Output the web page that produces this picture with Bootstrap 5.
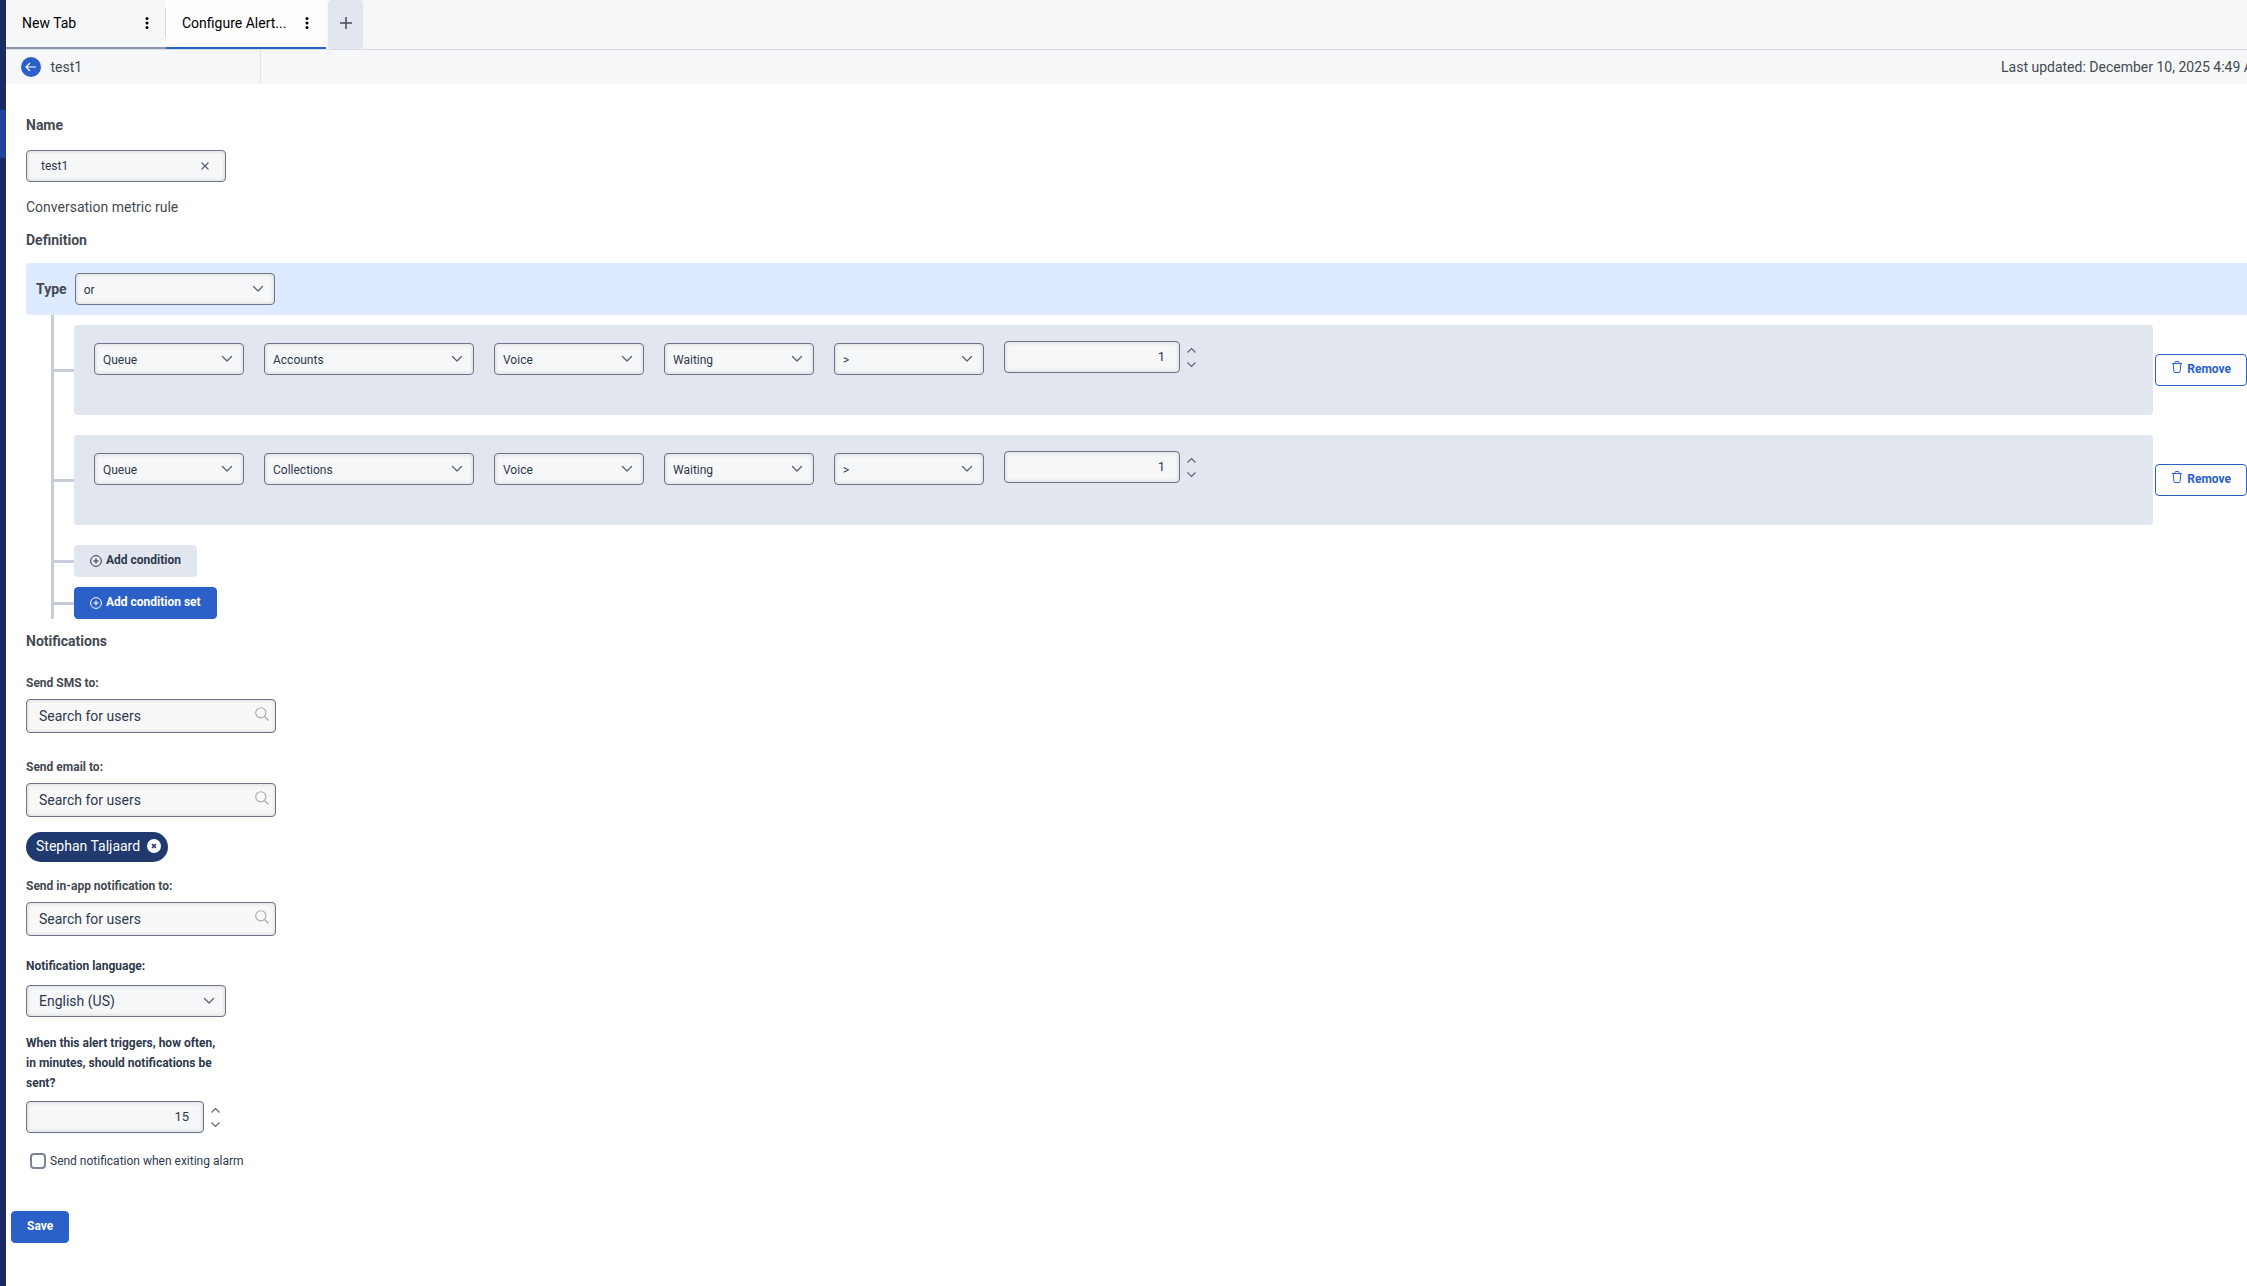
<!DOCTYPE html>
<html lang="en">
<head>
<meta charset="utf-8">
<meta name="viewport" content="width=device-width, initial-scale=1">
<title>Configure Alert</title>
<link href="https://cdn.jsdelivr.net/npm/bootstrap@5.3.0/dist/css/bootstrap.min.css" rel="stylesheet">
<style>
  body { font-family: Roboto, "Liberation Sans", sans-serif; font-size: 14px; line-height: 20px; color: #444a52; background: #fdfdfe; }
  svg { display: block; flex: none; }
  button { font: inherit; }
  .rail { width: 6px; background: #1b2a65; padding-top: 110px; }
  .rail-active { height: 48px; background: #2143a0; }
  .page { min-width: 0; background: #fff; }

  .tabs { height: 50px; background: #f6f7f9; border-bottom: 1px solid #d9dce2; }
  .tab { width: 160px; height: 49px; padding: 0 13px 2px 16px; border-bottom: 2px solid #8b96ae; color: #000; }
  .tab.current { background: #fdfdfe; border-color: #2a60c8; }
  .tab a { color: inherit; }
  .tab-split { width: 1px; height: 30px; background: #d0d4dc; position: absolute; right: 0; top: 8px; }
  .tab-add { width: 35px; height: 49px; margin-left: 2px; padding: 0 0 3px; background: #e2e6ee; color: #444a57; border-radius: 4px; }
  .plain { border: 0; padding: 0; background: none; color: inherit; }

  .crumb { height: 34px; padding-bottom: 1px; background: #f6f7f9; }
  .crumb-title { width: 255px; height: 33px; padding: 0 15px; border-right: 1px solid #dfe2e8; }
  .back { width: 20px; height: 20px; background: #2a60c8; }
  .updated { flex: 0 0 246px; }

  .form-area { padding: 31px 0 0 20px; }
  .heading { font-size: 14px; line-height: 20px; font-weight: 700; margin: 0; }
  .name-label, .name-field { margin-bottom: 15px; }
  .name-field { padding: 0 16px 0 14px; }
  .def { margin: 13px 0; }
  .notes { margin: 12px 0 22px; }
  .caption { display: block; font-size: 12px; line-height: 20px; font-weight: 700; }
  .dark { color: #2e394c; }
  .w-field { width: 200px; }
  .w-search { width: 250px; }
  .w-cond { width: 150px; }
  .w-queue { width: 210px; }
  .w-amount { width: 176px; }
  .w-often { width: 178px; }

  .field, .form-select.pick {
    height: 32px; border: 1px solid #6b7489; border-radius: 4px; background-color: #f6f7f9; color: #2e394c;
    box-shadow: inset 0 0 4px rgba(0, 0, 0, .16); font-size: 12px; line-height: 20px;
  }
  .form-select.pick {
    --bs-form-select-bg-img: url("data:image/svg+xml,%3Csvg xmlns='http://www.w3.org/2000/svg' viewBox='0 0 12 12'%3E%3Cpath fill='none' stroke='%23596275' stroke-width='1.3' stroke-linecap='round' stroke-linejoin='round' d='M1.5 3.5 6 8l4.500-4.500'/%3E%3C/svg%3E");
    padding: 6px 28px 4px 8px; background-position: right 10px center; background-size: 12px 12px;
  }
  .form-select.pick.large { font-size: 14px; padding: 5px 28px 5px 12px; }
  .field input { flex: 1; min-width: 0; border: 0; background: none; outline: 0; color: inherit; padding: 0; }
  .field input::placeholder { color: #2e394c; opacity: 1; }
  .search { height: 34px; padding: 0 6px 0 12px; background-color: #f8f8f8; font-size: 14px; }
  .search svg { margin-bottom: 4px; }
  .number { padding: 0 14px; font-size: 13px; }
  .number input { text-align: right; appearance: textfield; -moz-appearance: textfield; }
  .number input::-webkit-inner-spin-button { -webkit-appearance: none; margin: 0; }
  .spin { margin-left: 7px; gap: 7px; color: #596275; }

  .type-bar { height: 52px; background: #deeaff; padding: 0 10px; border-radius: 4px 0 0 4px; }
  .tree { margin-left: 25px; padding-top: 10px; border-left: 3px solid #c6ccda; }
  .branch { margin-bottom: 20px; }
  .leaf { margin-bottom: 10px; }
  .twig { flex: 0 0 20px; height: 3px; background: #c6ccda; }
  .condition { height: 90px; background: #e2e6ee; border-radius: 4px; padding: 18px 20px; gap: 20px; }
  .amount { margin-top: -2px; height: 32px; }
  .btn.act { --bs-btn-font-size: 12px; --bs-btn-line-height: 16px; --bs-btn-font-weight: 700; --bs-btn-border-radius: 4px; height: 32px; padding: 6px 15px 8px; }
  .btn-blue { --bs-btn-color: #fff; --bs-btn-bg: #2a60c8; --bs-btn-border-color: #2a60c8; }
  .btn-grey { --bs-btn-color: #2e394c; --bs-btn-bg: #e2e6ee; --bs-btn-border-color: #e2e6ee; }
  .btn-line { --bs-btn-color: #2a60c8; --bs-btn-bg: #fdfdfe; --bs-btn-border-color: #2a60c8; }
  .btn.remove { margin-left: 2px; gap: 5px; padding-left: 16px; }
  .add { gap: 4px; }
  .add svg { margin-top: 3px; }

  .gap-under { margin-bottom: 6px; }
  .sms-field { margin-bottom: 24px; }
  .chips { margin: 15px 0 14px; }
  .chip { height: 30px; padding: 0 7px 2px 10px; gap: 7px; background: #20396e; color: #fff; border-radius: 15px; }
  .inapp-field { margin-bottom: 20px; }
  .lang-label { margin-bottom: 9px; }
  .question { width: 200px; margin-top: 16px; }
  .exit-row { margin: 18px 0 40px 4px; font-size: 12px; }
  .form-check-input.tick { width: 16px; height: 16px; margin: 0; border: 2px solid #7b8496; border-radius: 4px; }
  .save { margin-left: -15px; }
</style>
<script src="https://cdn.jsdelivr.net/npm/bootstrap@5.3.0/dist/js/bootstrap.bundle.min.js"></script>
</head>
<body>
<svg class="d-none">
  <symbol id="dots" viewBox="0 0 4 12"><circle cx="2" cy="1.500" r="1.500"/><circle cx="2" cy="6" r="1.500"/><circle cx="2" cy="10.500" r="1.500"/></symbol>
  <symbol id="up" viewBox="0 0 9 7"><path d="M.5 5.500 4.500 1.500l4 4" fill="none" stroke="currentColor" stroke-width="1.100"/></symbol>
  <symbol id="down" viewBox="0 0 9 7"><path d="M.5 1.500l4 4 4-4" fill="none" stroke="currentColor" stroke-width="1.100"/></symbol>
  <symbol id="plus-ring" viewBox="0 0 12 12"><circle cx="6" cy="6" r="5.400" fill="none" stroke="currentColor" stroke-width="1"/><path d="M6 3.400v5.200M3.400 6h5.200" stroke="currentColor" stroke-width="1.200"/></symbol>
  <symbol id="glass" viewBox="0 0 14 14"><circle cx="5.800" cy="5.800" r="5.100" fill="none" stroke="#a9a9a9" stroke-width="1.100"/><path d="M9.500 9.500l4 4" stroke="#a9a9a9" stroke-width="1.200"/></symbol>
  <symbol id="bin" viewBox="0 0 10 12"><path d="M0 2.500h10M3 2.500v-1q0-1 1-1h2q1 0 1 1v1M1.200 2.500l.7 8q.1 1 1.100 1h4q1 0 1.100-1l.7-8" fill="none" stroke="currentColor" stroke-width="1"/></symbol>
</svg>

<div class="d-flex min-vh-100">
  <nav class="rail flex-shrink-0" aria-label="Main"><div class="rail-active"></div></nav>
  <main class="page flex-grow-1">
    <header class="tabs d-flex">
      <div class="tab d-flex align-items-center justify-content-between position-relative">
        <a href="#" class="text-decoration-none">New Tab</a>
        <button class="plain px-1" aria-label="Tab menu"><svg width="4" height="12"><use href="#dots"/></svg></button>
        <span class="tab-split"></span>
      </div>
      <div class="tab current d-flex align-items-center justify-content-between">
        <a href="#" class="text-decoration-none">Configure Alert...</a>
        <button class="plain px-1" aria-label="Tab menu"><svg width="4" height="12"><use href="#dots"/></svg></button>
      </div>
      <button class="tab-add border-0 d-flex align-items-center justify-content-center" aria-label="Add tab">
        <svg width="12" height="12" viewBox="0 0 12 12"><path d="M6 0v12M0 6h12" stroke="currentColor" stroke-width="1.500"/></svg>
      </button>
    </header>

    <div class="crumb d-flex align-items-center justify-content-between">
      <div class="crumb-title d-flex align-items-center">
        <button class="plain back rounded-circle d-flex align-items-center justify-content-center" aria-label="Back">
          <svg width="12" height="10" viewBox="0 0 12 10"><path d="M5 1 1 5l4 4M1 5h10" fill="none" stroke="#fff" stroke-width="1.200"/></svg>
        </button>
        <span class="ms-2 ps-0">&#8202;test1</span>
      </div>
      <div class="updated text-nowrap overflow-hidden">Last updated: December 10, 2025 4:49 AM</div>
    </div>

    <form class="form-area">
      <label class="heading name-label d-block" for="name">Name</label>
      <div class="field name-field w-field d-flex align-items-center">
        <input id="name" type="text" value="test1">
        <button type="button" class="plain" aria-label="Clear name"><svg width="8" height="8" viewBox="0 0 8 8"><path d="M.5.5l7 7M7.500.5l-7 7" stroke="#596275" stroke-width="1.200"/></svg></button>
      </div>
      <p class="mb-0">Conversation metric rule</p>
      <h2 class="heading def">Definition</h2>

      <div class="type-bar d-flex align-items-center">
        <label class="heading me-2" for="type">Type</label>
        <select id="type" class="form-select pick w-field"><option>or</option></select>
      </div>

      <div class="tree">
        <div class="d-flex align-items-center branch">
          <span class="twig"></span>
          <div class="condition flex-grow-1 d-flex align-items-start">
            <select class="form-select pick w-cond" aria-label="Scope"><option>Queue</option></select>
            <select class="form-select pick w-queue" aria-label="Queue name"><option>Accounts</option></select>
            <select class="form-select pick w-cond" aria-label="Media"><option>Voice</option></select>
            <select class="form-select pick w-cond" aria-label="Metric"><option>Waiting</option></select>
            <select class="form-select pick w-cond" aria-label="Operator"><option>&gt;</option></select>
            <div class="amount d-flex align-items-center">
              <div class="field number d-flex w-amount"><input type="number" value="1" aria-label="Threshold"></div>
              <div class="spin d-flex flex-column">
                <button type="button" class="plain" aria-label="Increase"><svg width="9" height="7"><use href="#up"/></svg></button>
                <button type="button" class="plain" aria-label="Decrease"><svg width="9" height="7"><use href="#down"/></svg></button>
              </div>
            </div>
          </div>
          <button type="button" class="btn btn-line act remove d-flex"><svg width="10" height="12"><use href="#bin"/></svg>Remove</button>
        </div>
        <div class="d-flex align-items-center branch">
          <span class="twig"></span>
          <div class="condition flex-grow-1 d-flex align-items-start">
            <select class="form-select pick w-cond" aria-label="Scope"><option>Queue</option></select>
            <select class="form-select pick w-queue" aria-label="Queue name"><option>Collections</option></select>
            <select class="form-select pick w-cond" aria-label="Media"><option>Voice</option></select>
            <select class="form-select pick w-cond" aria-label="Metric"><option>Waiting</option></select>
            <select class="form-select pick w-cond" aria-label="Operator"><option>&gt;</option></select>
            <div class="amount d-flex align-items-center">
              <div class="field number d-flex w-amount"><input type="number" value="1" aria-label="Threshold"></div>
              <div class="spin d-flex flex-column">
                <button type="button" class="plain" aria-label="Increase"><svg width="9" height="7"><use href="#up"/></svg></button>
                <button type="button" class="plain" aria-label="Decrease"><svg width="9" height="7"><use href="#down"/></svg></button>
              </div>
            </div>
          </div>
          <button type="button" class="btn btn-line act remove d-flex"><svg width="10" height="12"><use href="#bin"/></svg>Remove</button>
        </div>
        <div class="d-flex align-items-center leaf">
          <span class="twig"></span>
          <button type="button" class="btn btn-grey act d-flex add"><svg width="12" height="12"><use href="#plus-ring"/></svg>Add condition</button>
        </div>
        <div class="d-flex align-items-center">
          <span class="twig"></span>
          <button type="button" class="btn btn-blue act d-flex add"><svg width="12" height="12"><use href="#plus-ring"/></svg>Add condition set</button>
        </div>
      </div>

      <h2 class="heading notes">Notifications</h2>

      <label class="caption gap-under" for="sms">Send SMS to:</label>
      <div class="field search w-search d-flex align-items-center sms-field">
        <input id="sms" type="text" placeholder="Search for users"><svg width="14" height="14"><use href="#glass"/></svg>
      </div>

      <label class="caption gap-under" for="email">Send email to:</label>
      <div class="field search w-search d-flex align-items-center">
        <input id="email" type="text" placeholder="Search for users"><svg width="14" height="14"><use href="#glass"/></svg>
      </div>
      <div class="d-flex chips">
        <span class="chip d-inline-flex align-items-center">Stephan Taljaard
          <button type="button" class="plain" aria-label="Remove Stephan Taljaard"><svg width="14" height="14" viewBox="0 0 14 14"><circle cx="7" cy="7" r="7" fill="#fff"/><path d="M5 5l4 4M9 5l-4 4" stroke="#20396e" stroke-width="1.600"/></svg></button>
        </span>
      </div>

      <label class="caption gap-under" for="inapp">Send in-app notification to:</label>
      <div class="field search w-search d-flex align-items-center inapp-field">
        <input id="inapp" type="text" placeholder="Search for users"><svg width="14" height="14"><use href="#glass"/></svg>
      </div>

      <label class="caption dark lang-label" for="lang">Notification language:</label>
      <select id="lang" class="form-select pick large w-field"><option>English (US)</option></select>

      <label class="caption dark question mb-2" for="often">When this alert triggers, how often, in minutes, should notifications be sent?</label>
      <div class="d-flex align-items-center">
        <div class="field number d-flex w-often"><input id="often" type="number" value="15"></div>
        <div class="spin d-flex flex-column">
          <button type="button" class="plain" aria-label="Increase"><svg width="9" height="7"><use href="#up"/></svg></button>
          <button type="button" class="plain" aria-label="Decrease"><svg width="9" height="7"><use href="#down"/></svg></button>
        </div>
      </div>

      <div class="d-flex align-items-center exit-row">
        <input id="exit" type="checkbox" class="form-check-input tick">
        <label class="dark ms-1" for="exit">Send notification when exiting alarm</label>
      </div>
      <button type="submit" class="btn btn-blue act save">Save</button>
    </form>
  </main>
</div>
</body>
</html>
